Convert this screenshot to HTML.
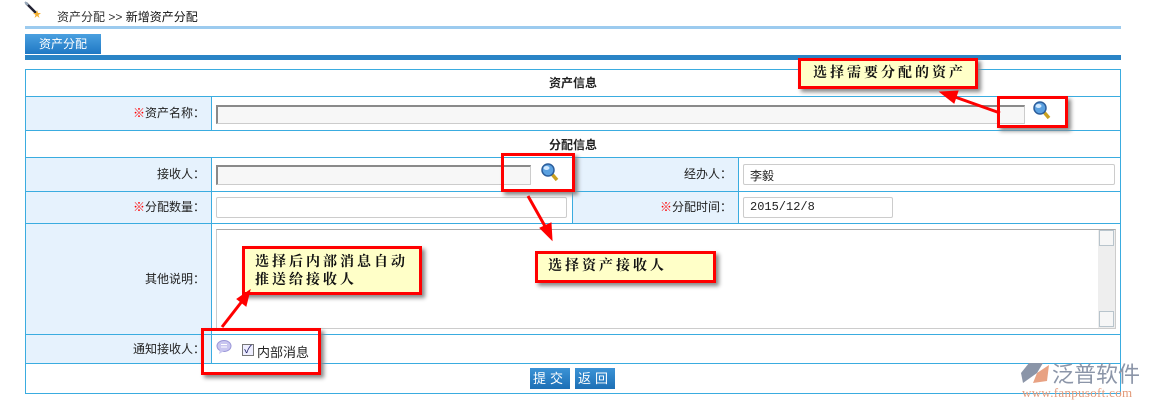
<!DOCTYPE html>
<html><head><meta charset="utf-8"><style>
*{margin:0;padding:0;box-sizing:border-box}
body{width:1151px;height:404px;background:#fff;position:relative;overflow:hidden;font-family:"Liberation Sans","Noto Sans CJK SC",sans-serif;font-size:12px;color:#222}
.a{position:absolute}
.lbl{position:absolute;background:#e6f2fd;text-align:right;padding-right:6px;font-size:12px;color:#222}
.h{position:absolute;height:1px;background:#3aace0}
.v{position:absolute;width:1px;background:#3aace0}
.inp{position:absolute;background:#f7f7f7;border:1px solid #ccc;border-top:2px solid #8a8a8a;border-left:2px solid #8a8a8a}
.inp2{position:absolute;background:#fff;border:1px solid #ccc;border-radius:2px;font-size:12px;padding:2px 0 0 6px;font-family:"Liberation Mono","Noto Sans CJK SC",monospace}
.note{position:absolute;background:#ffffc8;border:3px solid #f00;box-shadow:3px 3px 4px #888;font-family:"Liberation Serif","Noto Serif CJK SC",serif;font-weight:bold;font-size:14px;letter-spacing:3px;color:#111}
.rb{position:absolute;border:3px solid #f00;box-shadow:3px 3px 4px #888}
.star{color:#f00}
.btn{position:absolute;background:linear-gradient(#3b93d6,#1d6fb5);color:#fff;font-size:13px;text-align:center;line-height:21px;letter-spacing:4px}
</style></head><body>
<svg class="a" style="left:24px;top:1px" width="18" height="18" viewBox="0 0 18 18"><line x1="2" y1="2" x2="12" y2="12" stroke="#223" stroke-width="2.5"/><line x1="1" y1="1" x2="4" y2="4" stroke="#9ab" stroke-width="2"/><polygon points="13,9 14,12 17,12 14.5,14 15.5,17 13,15 10.5,17 11.5,14 9,12 12,12" fill="#f4b030"/></svg>
<div class="a" style="left:57px;top:8px;font-size:12px;color:#333">资产分配 &gt;&gt; <span style="color:#111">新增资产分配</span></div>
<div class="a" style="left:25px;top:26px;width:1096px;height:3px;background:#9ccbef"></div>
<div class="a" style="left:25px;top:34px;width:76px;height:20px;background:linear-gradient(#4aa0e0,#1f78c4);color:#fff;font-size:12px;line-height:20px;text-align:center">资产分配</div>
<div class="a" style="left:25px;top:55px;width:1096px;height:5px;background:#2a84c6"></div>

<div class="a" style="left:25px;top:69px;width:1096px;height:325px;border:1px solid #3aace0"></div>
<div class="a" style="left:26px;top:74px;width:1094px;text-align:center;font-weight:bold;font-size:12px">资产信息</div>
<div class="h" style="left:25px;top:96px;width:1096px"></div>
<div class="lbl" style="left:26px;top:97px;width:185px;height:33px;line-height:33px"><span class="star">※</span>资产名称：</div>
<div class="v" style="left:211px;top:96px;height:34px"></div>
<div class="inp" style="left:216px;top:105px;width:809px;height:19px"></div>
<div class="h" style="left:25px;top:130px;width:1096px"></div>
<div class="a" style="left:26px;top:136px;width:1094px;text-align:center;font-weight:bold">分配信息</div>
<div class="h" style="left:25px;top:157px;width:1096px"></div>
<div class="lbl" style="left:26px;top:158px;width:185px;height:33px;line-height:33px">接收人：</div>
<div class="lbl" style="left:573px;top:158px;width:165px;height:33px;line-height:33px">经办人：</div>
<div class="inp" style="left:216px;top:165px;width:315px;height:20px"></div>
<div class="inp2" style="left:743px;top:164px;width:372px;height:21px">李毅</div>
<div class="h" style="left:25px;top:191px;width:1096px"></div>
<div class="lbl" style="left:26px;top:192px;width:185px;height:31px;line-height:31px"><span class="star">※</span>分配数量：</div>
<div class="lbl" style="left:573px;top:192px;width:165px;height:31px;line-height:31px"><span class="star">※</span>分配时间：</div>
<div class="inp2" style="left:216px;top:197px;width:351px;height:21px"></div>
<div class="inp2" style="left:743px;top:197px;width:150px;height:21px">2015/12/8</div>
<div class="v" style="left:572px;top:157px;height:66px"></div>
<div class="v" style="left:738px;top:157px;height:66px"></div>
<div class="h" style="left:25px;top:223px;width:1096px"></div>
<div class="lbl" style="left:26px;top:224px;width:185px;height:110px;line-height:110px">其他说明：</div>
<div class="a" style="left:216px;top:229px;width:900px;height:100px;border:1px solid #ccc;border-top:1px solid #aaa;background:#fff"></div>
<div class="a" style="left:1098px;top:230px;width:17px;height:98px;background:#eee"></div>
<div class="a" style="left:1099px;top:230px;width:15px;height:16px;background:#f6f6f6;border:1px solid #b8c4cc"></div>
<div class="a" style="left:1099px;top:311px;width:15px;height:16px;background:#f6f6f6;border:1px solid #b8c4cc"></div>
<div class="h" style="left:25px;top:334px;width:1096px"></div>
<div class="lbl" style="left:26px;top:335px;width:185px;height:28px;line-height:28px">通知接收人：</div>
<div class="v" style="left:211px;top:157px;height:206px"></div>
<svg class="a" style="left:216px;top:339px" width="16" height="16" viewBox="0 0 16 16"><ellipse cx="8" cy="7" rx="7" ry="5.5" fill="#c9c6f0" stroke="#9a96d8"/><path d="M4 11 L3 15 L8 12Z" fill="#c9c6f0"/><line x1="5" y1="5.5" x2="11" y2="5.5" stroke="#fff"/><line x1="5" y1="8" x2="11" y2="8" stroke="#fff"/></svg>
<div class="a" style="left:242px;top:344px;width:12px;height:12px;border:1px solid #777;background:#eef;font-size:11px;line-height:10px;text-align:center;color:#226">✓</div>
<div class="a" style="left:257px;top:342px;font-size:13px">内部消息</div>
<div class="h" style="left:25px;top:363px;width:1096px"></div>
<div class="btn" style="left:530px;top:368px;width:40px;height:21px">提交</div>
<div class="btn" style="left:575px;top:368px;width:40px;height:21px">返回</div>

<svg class="a" style="left:1032px;top:100px" width="20" height="20" viewBox="0 0 20 20"><line x1="11" y1="11" x2="17" y2="18" stroke="#c9a020" stroke-width="3.5"/><circle cx="8" cy="8" r="6" fill="#5aa0e0" stroke="#2c5e9c" stroke-width="1.5"/><ellipse cx="6.5" cy="6" rx="3" ry="2" fill="#d0e8ff"/></svg>
<svg class="a" style="left:540px;top:162px" width="20" height="20" viewBox="0 0 20 20"><line x1="11" y1="11" x2="17" y2="18" stroke="#c9a020" stroke-width="3.5"/><circle cx="8" cy="8" r="6" fill="#5aa0e0" stroke="#2c5e9c" stroke-width="1.5"/><ellipse cx="6.5" cy="6" rx="3" ry="2" fill="#d0e8ff"/></svg>

<div class="rb" style="left:997px;top:96px;width:71px;height:32px"></div>
<div class="note" style="left:798px;top:58px;width:180px;height:31px;line-height:25px;padding-left:12px">选择需要分配的资产</div>
<div class="rb" style="left:501px;top:153px;width:74px;height:39px"></div>
<div class="note" style="left:535px;top:251px;width:181px;height:32px;line-height:26px;padding-left:10px">选择资产接收人</div>
<div class="note" style="left:242px;top:246px;width:180px;height:49px;line-height:18px;padding:5px 0 0 10px">选择后内部消息自动<br>推送给接收人</div>
<div class="rb" style="left:201px;top:328px;width:120px;height:47px"></div>
<svg class="a" style="left:0;top:0" width="1151" height="404">
<g stroke="#f00" fill="#f00" stroke-width="3">
<line x1="1000" y1="113" x2="955" y2="97"/><polygon points="940,92 958,91 954,103" stroke-width="1"/>
<line x1="528" y1="196" x2="546" y2="228"/><polygon points="552,240 540,228 551,223" stroke-width="1"/>
<line x1="222" y1="327" x2="243" y2="300"/><polygon points="250,290 246,306 237,299" stroke-width="1"/>
</g></svg>

<svg class="a" style="left:1021px;top:361px" width="30" height="24" viewBox="0 0 30 24"><polygon points="8,2 22,2 16,12 2,22 0,12" fill="#8b95a8"/><polygon points="16,12 28,4 26,20 12,22" fill="#e8a283"/></svg>
<div class="a" style="left:1052px;top:357px;font-size:22px;color:#8b95a8;letter-spacing:0px;font-family:'Noto Sans CJK SC',sans-serif">泛普软件</div>
<div class="a" style="left:1022px;top:385px;font-size:13px;color:#e39a7a;font-family:'Liberation Serif',serif;letter-spacing:0.3px">www.fanpusoft.com</div>
</body></html>
